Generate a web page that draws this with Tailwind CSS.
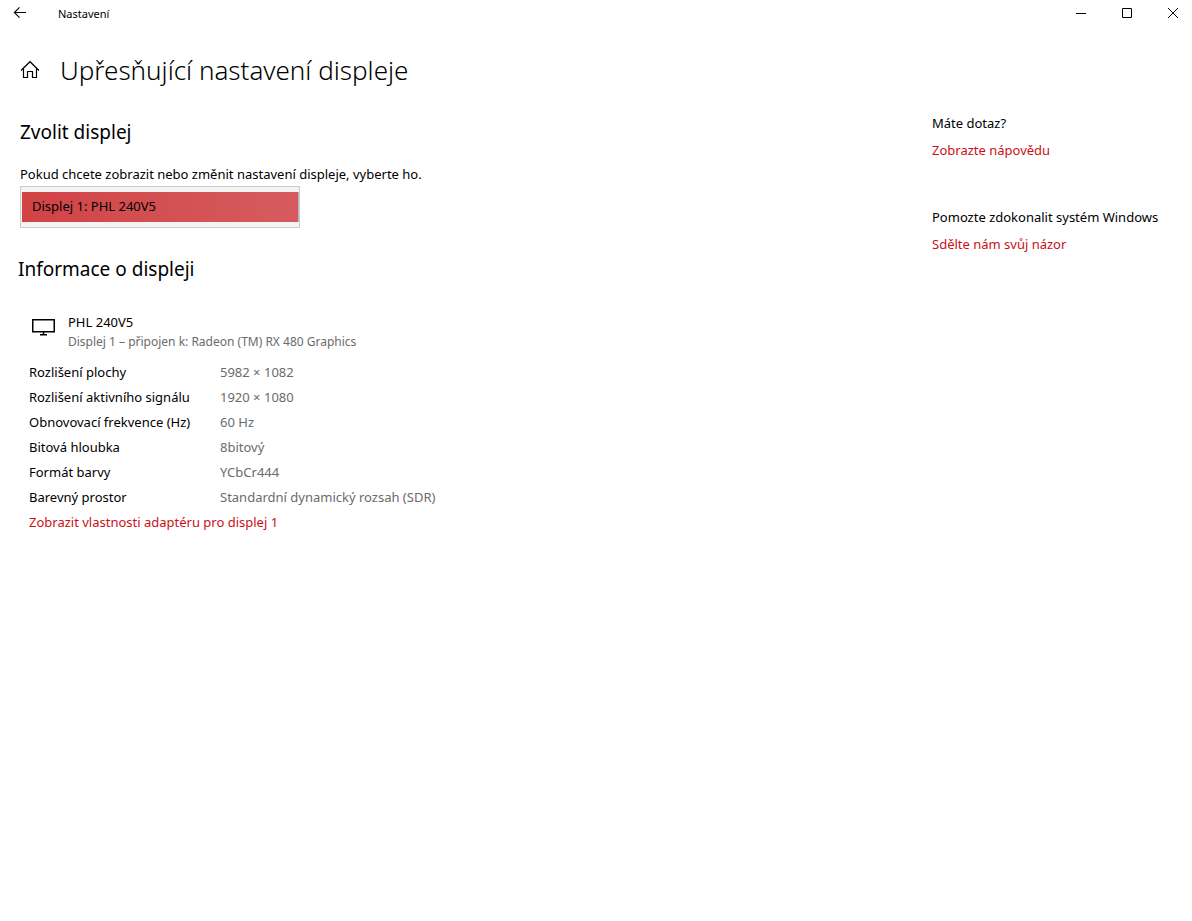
<!DOCTYPE html>
<html lang="cs">
<head>
  <meta charset="UTF-8" />
  <meta name="viewport" content="width=device-width, initial-scale=1">
  <title>Nastavení</title>
  <script src="https://cdn.jsdelivr.net/npm/@tailwindcss/browser@4"></script>
</head>
<body class="min-h-screen bg-white text-black text-[13px] leading-5 font-['Segoe_UI','Noto_Sans',sans-serif]">

  <!-- Title bar -->
  <header class="flex items-center justify-between h-7">
    <div class="flex items-center">
      <button aria-label="Zpět" class="flex items-center justify-center w-10 h-7">
        <svg class="w-4 h-4 -mt-0.5" viewBox="0 0 16 16" fill="none" stroke="currentColor" stroke-width="1.1">
          <path d="M14 7.5H2.5M7.5 2.3L2.3 7.5l5.2 5.2" />
        </svg>
      </button>
      <span class="ml-[18px] text-[11px]">Nastavení</span>
    </div>
    <div class="flex items-center -mr-1">
      <button aria-label="Minimalizovat" class="flex items-center justify-center w-[46px] h-7">
        <svg class="w-3 h-3" viewBox="0 0 12 12" fill="none" stroke="currentColor"><path d="M1 5.5h10" /></svg>
      </button>
      <button aria-label="Maximalizovat" class="flex items-center justify-center w-[46px] h-7">
        <svg class="w-3 h-3" viewBox="0 0 12 12" fill="none" stroke="currentColor"><path d="M1.5 .5h9v9h-9z" /></svg>
      </button>
      <button aria-label="Zavřít" class="flex items-center justify-center w-[46px] h-7">
        <svg class="w-3 h-3" viewBox="0 0 12 12" fill="none" stroke="currentColor"><path d="M1 0l10 10M11 0L1 10" /></svg>
      </button>
    </div>
  </header>

  <div class="flex justify-between pt-[22px]">
    <main class="pl-5">
      <div class="flex items-center h-10 gap-5">
        <a href="#" aria-label="Domů">
          <svg class="w-5 h-5" viewBox="0 0 20 20" fill="none" stroke="currentColor" stroke-width="1.2">
            <path d="M1 10.5L10 1.7l9 8.8M3.5 8.3v9.2h4v-6h5v6h4V8.3" />
          </svg>
        </a>
        <h1 class="text-[26px] leading-10 font-light">Upřesňující nastavení displeje</h1>
      </div>

      <h2 class="mt-7 text-[19px] leading-7">Zvolit displej</h2>
      <label for="display" class="block mt-[18px]">Pokud chcete zobrazit nebo změnit nastavení displeje, vyberte ho.</label>
      <div class="mt-0.5 w-70 px-px py-[5px] border border-[#cccccc] bg-[#f4f4f4]">
        <select id="display" class="block w-full h-[30px] px-2.5 pb-0.5 appearance-none bg-linear-to-r from-[#d14345] to-[#d65b5e] shadow-[1px_0_0_#b4b4b4]">
          <option>Displej 1: PHL 240V5</option>
        </select>
      </div>

      <h2 class="mt-[27px] -ml-0.5 text-[19px] leading-7">Informace o displeji</h2>
      <div class="flex mt-[29px] pl-3">
        <svg class="w-6 h-5 mt-1.5" viewBox="0 0 24 20" fill="none" stroke="currentColor" stroke-width="1.5">
          <path d="M.75 1.75h21.5v12H.75zM11.5 14v3M8 16.75h7" />
        </svg>
        <div class="ml-3">
          <p>PHL 240V5</p>
          <p class="text-xs leading-5 text-[#6b6b6b]">Displej 1 – připojen k: Radeon (TM) RX 480 Graphics</p>
        </div>
      </div>

      <table class="mt-[7px] ml-[9px] text-left">
        <tbody>
          <tr class="h-[25px]">
            <th class="w-[191px] font-normal">Rozlišení plochy</th>
            <td class="text-[#6b6b6b]">5982 × 1082</td>
          </tr>
          <tr class="h-[25px]">
            <th class="font-normal">Rozlišení aktivního signálu</th>
            <td class="text-[#6b6b6b]">1920 × 1080</td>
          </tr>
          <tr class="h-[25px]">
            <th class="font-normal">Obnovovací frekvence (Hz)</th>
            <td class="text-[#6b6b6b]">60 Hz</td>
          </tr>
          <tr class="h-[25px]">
            <th class="font-normal">Bitová hloubka</th>
            <td class="text-[#6b6b6b]">8bitový</td>
          </tr>
          <tr class="h-[25px]">
            <th class="font-normal">Formát barvy</th>
            <td class="text-[#6b6b6b]">YCbCr444</td>
          </tr>
          <tr class="h-[25px]">
            <th class="font-normal">Barevný prostor</th>
            <td class="text-[#6b6b6b]">Standardní dynamický rozsah (SDR)</td>
          </tr>
        </tbody>
      </table>
      <a href="#" class="block mt-[3px] ml-[9px] text-[#cb0f16] hover:text-gray-500">Zobrazit vlastnosti adaptéru pro displej 1</a>
    </main>

    <aside class="w-65 shrink-0 pt-[63px]">
      <p>Máte dotaz?</p>
      <a href="#" class="block mt-[7px] text-[#cb0f16] hover:text-gray-500">Zobrazte nápovědu</a>
      <p class="mt-[47px]">Pomozte zdokonalit systém Windows</p>
      <a href="#" class="block mt-[7px] text-[#cb0f16] hover:text-gray-500">Sdělte nám svůj názor</a>
    </aside>
  </div>

</body>
</html>
